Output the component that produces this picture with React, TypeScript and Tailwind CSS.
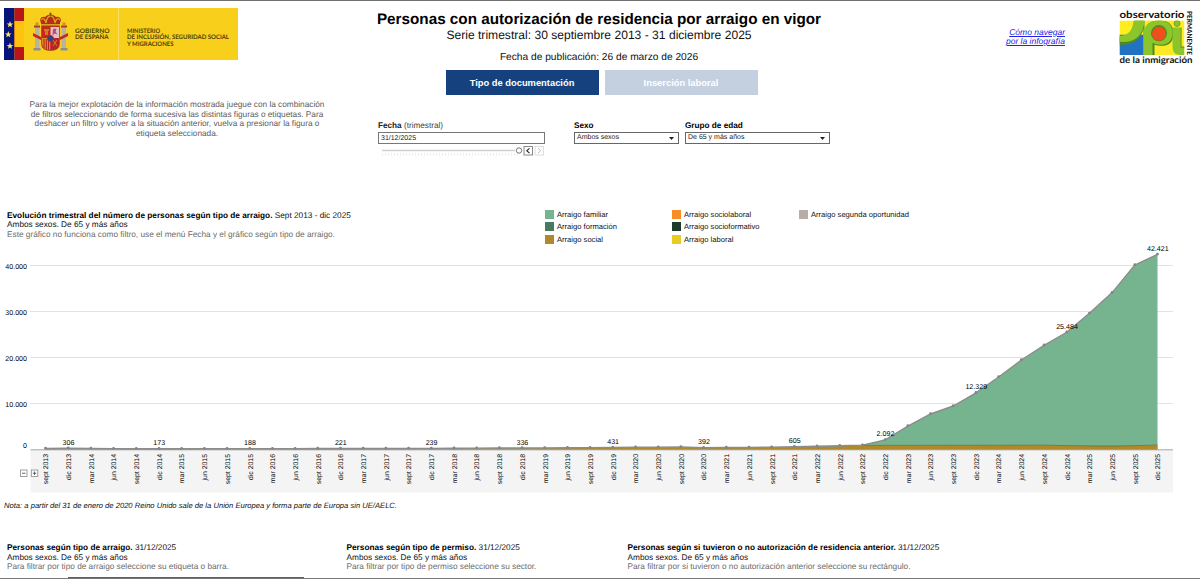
import clsx from 'clsx';

const LEFT = 45.5;
const STEP = 22.694;
const BASE = 209.5;
const UNIT = 46 / 10000;

const totals = [
  220, 306, 250, 200, 160, 173, 175, 180, 185, 188, 195, 200, 210, 221, 225, 230, 235,
  239, 260, 290, 310, 336, 350, 380, 400, 431, 480, 520, 540, 392, 420, 450, 520, 605,
  700, 820, 960, 2092, 5100, 7720, 9450, 12329, 15760, 19450, 22650, 25484, 29600, 34100,
  40100, 42421,
];

const months = ['mar', 'jun', 'sept', 'dic'];

const points = totals.map((total, i) => {
  const month = months[(i + 2) % 4];
  const year = 2013 + Math.floor((i + 2) / 4);
  return {
    total,
    label: `${month} ${year}`,
    isDec: month === 'dic',
    x: LEFT + i * STEP,
    y: BASE - total * UNIT,
    social: BASE - Math.min(total * 0.85, 850) * UNIT,
  };
});

const ticks = [0, 10000, 20000, 30000, 40000];

const legend = [
  { label: 'Arraigo familiar', color: 'bg-[#76b490]' },
  { label: 'Arraigo formación', color: 'bg-[#477a60]' },
  { label: 'Arraigo social', color: 'bg-[#b08a2a]' },
  { label: 'Arraigo sociolaboral', color: 'bg-[#f98d28]' },
  { label: 'Arraigo socioformativo', color: 'bg-[#1d3a2b]' },
  { label: 'Arraigo laboral', color: 'bg-[#e8cb25]' },
  { label: 'Arraigo segunda oportunidad', color: 'bg-[#b8ada8]' },
];

const panels = [
  {
    title: 'Personas según tipo de arraigo.',
    hint: 'Para filtrar por tipo de arraigo seleccione su etiqueta o barra.',
    width: 'w-[339.5px]',
  },
  {
    title: 'Personas según tipo de permiso.',
    hint: 'Para filtrar por tipo de permiso seleccione su sector.',
    width: 'w-[281px]',
  },
  {
    title: 'Personas según si tuvieron o no autorización de residencia anterior.',
    hint: 'Para filtrar por si tuvieron o no autorización anterior seleccione su rectángulo.',
    width: 'w-[400px]',
  },
];

const formatNumber = (n: number) => String(n).replace(/\B(?=(\d{3})+$)/g, '.');

function GovernmentLogo() {
  return (
    <svg className="block" width="234" height="52" viewBox="0 0 234 52">
      <rect width="234" height="52" fill="#f8d01c" />
      <rect width="10.5" height="52" fill="#07147a" />
      <rect x="10.5" width="9.5" height="52" fill="#b9161c" />
      <rect x="10.5" y="13" width="9.5" height="26" fill="#ffc20e" />
      <path d="M114.5 0V52" stroke="#fbdf66" strokeWidth="1" />
      {[[6, 16.5], [4.3, 26.5], [6, 38]].map(([x, y]) => (
        <path
          key={y}
          transform={`translate(${x} ${y})`}
          d="M0-3.4.9-1.1 3.3-1 1.4.5 2 2.8 0 1.5-2 2.8-1.4.5-3.3-1-.9-1.1Z"
          fill="#fbe36a"
        />
      ))}
      {/* coat of arms */}
      <g>
        <path d="M31 19h4.5v23H31zM57.500 19H62v23h-4.500z" fill="#b9b3a0" />
        <path d="M30 17.500h6v2h-6zM57 17.500h6v2h-6z" fill="#a63a22" />
        <path d="M31.500 14.500h3v3h-3zM58.500 14.500h3v3h-3z" fill="#c99418" />
        <path d="M29.500 40h7v2.500h-7zM56.500 40h7v2.500h-7z" fill="#8e8f86" />
        <path d="M29 25l8 4v3l-8-4zM64 25l-8 4v3l8-4z" fill="#c2281f" />
        <path d="M37.500 18h18v17.500q0 7-9 7t-9-7z" fill="#c8251f" stroke="#8b4a1c" strokeWidth=".7" />
        <path d="M46.500 19H55v11h-8.500z" fill="#e5bfc4" />
        <path d="M49 21.500q2-2 3.500 0l-1 2 2 3-3-1-2 2z" fill="#b14a86" />
        <path d="M38 30h8.500v12q-8.500-.5-8.500-6.500z" fill="#d8892a" />
        <path d="M40 31v9M42.300 31v10.500M44.500 31v11" stroke="#b7241d" strokeWidth="1" />
        <path d="M46.500 30H55v5.500q0 6-8.500 6.500z" fill="#b8222b" />
        <path d="M40 21h5v2h-1v4h-3v-4h-1z" fill="#cf7a26" />
        <path d="M49 32l4 6M53 32l-4 6" stroke="#d99122" strokeWidth=".8" />
        <circle cx="46.500" cy="30.500" r="3" fill="#244a86" stroke="#b7241d" strokeWidth=".8" />
        <path d="M37.500 17.500h18l1.500-6q-1-3.500-5-2.500-2-2.500-5.500-2.500T41 9q-4-1-5 2.500z" fill="#b72c1d" />
        <path d="M37 12q3-4 5 3 1-7 4.500-7t4.500 7q2-7 5-3M37 16.700h19" fill="none" stroke="#d6a31c" strokeWidth="1.300" />
        <path d="M46.500 4.500v4M45 6h3" stroke="#8f4a16" strokeWidth="1" />
      </g>
      <g fill="#4b3e0c" fontFamily="Lato, sans-serif" fontSize="6.200" fontWeight="700">
        <text x="71" y="24.600" textLength="34.500" lengthAdjust="spacingAndGlyphs">GOBIERNO</text>
        <text x="71" y="31.300" textLength="33.500" lengthAdjust="spacingAndGlyphs">DE ESPAÑA</text>
        <text x="123" y="24.600" textLength="33" lengthAdjust="spacingAndGlyphs">MINISTERIO</text>
        <text x="123" y="31.300" textLength="102" lengthAdjust="spacingAndGlyphs">DE INCLUSIÓN, SEGURIDAD SOCIAL</text>
        <text x="123" y="38" textLength="46.500" lengthAdjust="spacingAndGlyphs">Y MIGRACIONES</text>
      </g>
    </svg>
  );
}

function ObservatoryLogo() {
  return (
    <svg className="block" width="76" height="58" viewBox="0 0 76 58">
      <g fill="#111" fontFamily="Lato, sans-serif" fontWeight="700">
        <text x=".5" y="8.700" fontSize="10" textLength="65" lengthAdjust="spacingAndGlyphs">observatorio</text>
        <text x=".5" y="53.500" fontSize="9" textLength="73" lengthAdjust="spacingAndGlyphs">de la inmigración</text>
        <text transform="translate(67.500 2) rotate(90)" fontSize="7" textLength="44" lengthAdjust="spacingAndGlyphs">PERMANENTE</text>
      </g>
      <svg x="0.500" y="11.500" width="65" height="34.500" viewBox="0 0 65 34" preserveAspectRatio="none">
        <rect width="65" height="34" fill="#ffed1f" />
        <path d="M0 14h24v20H0z" fill="#2272c4" />
        <path d="M28 0h26v34H28z" fill="#ffe826" />
        <path d="M0 17q13 1 15-17h10v34h-1V8Q20 25 0 24z" fill="#4c8a20" />
        <path d="M0 15q13 0 14-15h11q-2 23-25 21z" fill="#8ac52c" />
        <path d="M25 34V13Q26 0 40 0q14 0 14 13 0 12-13 12-4 0-6-1v10z" fill="#4c8a20" />
        <path d="M24 34V13Q25 0 39 0q14 0 14 12 0 12-13 12-4 0-7-2v12z" fill="#8ac52c" />
        <circle cx="39.500" cy="12.500" r="8" fill="#4c8a20" />
        <circle cx="39.500" cy="13" r="7" fill="#ee4f1b" />
        <path d="M53 7h8v19h4v8h-5q-7-1-7-8z" fill="#8ac52c" />
        <path d="M61.500 7v19H65" fill="none" stroke="#4c8a20" strokeWidth="1" />
        <circle cx="57.500" cy="3" r="3" fill="#8ac52c" stroke="#4c8a20" strokeWidth=".6" />
      </svg>
    </svg>
  );
}

function Select({ label, value, className }: { label: string; value: string; className: string }) {
  return (
    <div className={className}>
      <p className="h-[12px] pt-[1px] text-[8.2px] leading-[10px] font-bold text-black">{label}</p>
      <div className="flex h-[12px] items-center justify-between border border-[#666] pr-[4px] pl-[2px] text-[7px] text-[#222]">
        <span>{value}</span>
        <svg width="5" height="3" viewBox="0 0 5 3">
          <path d="M0 0h5L2.500 3z" fill="#222" />
        </svg>
      </div>
    </div>
  );
}

function DateFilter() {
  return (
    <div className="w-[167px]">
      <p className="h-[12px] pt-[1px] text-[8.2px] leading-[10px] text-[#444]">
        <span className="font-bold text-[#222]">Fecha</span> (trimestral)
      </p>
      <div className="flex h-[12px] items-center border border-[#777] pt-px pl-[2px] text-[7px] leading-[9px] text-[#222]">
        31/12/2025
      </div>
      <svg className="block" width="167" height="14" viewBox="0 0 167 14">
        <path d="M4 6.500H137" stroke="#d0d0d0" strokeWidth="1.500" />
        <path d="M4 10.500H140" stroke="#e8e8e8" strokeWidth="2" strokeDasharray="1 2" />
        <circle cx="141" cy="6.500" r="2.700" fill="#fff" stroke="#555" strokeWidth=".8" />
        <rect x="146" y="2.500" width="8.500" height="8.500" fill="#fff" stroke="#888" />
        <path d="M151.500 4.300l-2.700 2.400 2.700 2.400" fill="none" stroke="#222" strokeWidth="1.100" />
        <rect x="157" y="2.500" width="8.500" height="8.500" fill="#fff" stroke="#ddd" />
        <path d="M160 4.300l2.700 2.400-2.700 2.400" fill="none" stroke="#bbb" />
      </svg>
    </div>
  );
}

function EvolutionChart() {
  const line = points.map((p) => `${p.x},${p.y}`).join(' ');
  const social = points.map((p) => `${p.x},${p.social}`).join(' ');
  const last = points[points.length - 1];

  return (
    <svg className="block" width="1200" height="255" viewBox="0 0 1200 255" fontFamily="Liberation Sans, Arial, sans-serif">
      <rect x="30.500" y="210" width="1142.500" height="42.500" fill="#f4f4f4" />
      {ticks.map((tick) => (
        <g key={tick}>
          {tick > 0 && (
            <path d={`M30.500 ${Math.floor(BASE - tick * UNIT) + 0.5}H1173`} stroke="#c4c4c4" strokeDasharray="1 1" />
          )}
          <text x="27" y={BASE - tick * UNIT + (tick ? 3 : -1.7)} fontSize="7.100" textAnchor="end" fill="#000">
            {formatNumber(tick)}
          </text>
        </g>
      ))}
      <polygon points={`${LEFT},${BASE} ${line} ${last.x},${BASE}`} fill="#76b490" />
      <polygon points={`${LEFT},${BASE} ${social} ${last.x},${BASE}`} fill="#b08a2a" />
      <path d="M862 205.400L1045 205.200L1090 206L1120 206L1157.500 205" fill="none" stroke="#6b7c45" strokeWidth=".9" />
      <path d="M30.500 209.800H1173" stroke="#8f8f8f" strokeWidth=".8" />
      <polyline points={line} fill="none" stroke="#8c8c8c" strokeWidth="1.400" />
      {points.map((p) => (
        <circle key={p.label} cx={p.x} cy={p.y - 0.3} r="1.400" fill="#858585" />
      ))}
      {points.map((p) => (
        <text
          key={p.label}
          transform={`translate(${p.x + 2.8} 214) rotate(-90)`}
          fontSize="6.900"
          textAnchor="end"
          fill="#000"
        >
          {p.label}
        </text>
      ))}
      {points.filter((p) => p.isDec).map((p) => (
        <text key={p.label} x={p.x + 0.3} y={p.y - 3.4} fontSize="7.100" textAnchor="middle" fill="#000">
          {formatNumber(p.total)}
        </text>
      ))}
      <g fill="#fff" stroke="#888" strokeWidth=".8">
        <rect x="20.500" y="230" width="6.500" height="6.500" />
        <rect x="31.300" y="230" width="6.500" height="6.500" />
        <path d="M22 233.250h3.500M32.800 233.250h3.500M34.550 231.500v3.500" stroke="#444" />
      </g>
    </svg>
  );
}

export default function App() {
  return (
    <div className="flex h-[579px] w-[1200px] flex-col overflow-hidden border-t border-b border-t-[#6f6f6f] border-b-[#777] bg-white font-['Liberation_Sans',Arial,sans-serif] [text-rendering:geometricPrecision]">
      <header className="flex h-[208.5px] shrink-0">
        <div className="w-[359px] pt-[7px] pl-[4px]">
          <GovernmentLogo />
          <p className="mt-[40px] w-[346px] text-center text-[8.25px] leading-[9.6px] text-[#5c5c5c]">
            Para la mejor explotación de la información mostrada juegue con la combinación
            <br />
            de filtros seleccionando de forma sucesiva las distintas figuras o etiquetas. Para
            <br />
            deshacer un filtro y volver a la situación anterior, vuelva a presionar la figura o
            <br />
            etiqueta seleccionada.
          </p>
        </div>

        <div className="w-[480px] pt-[10px]">
          <h1 className="text-center text-[15.25px] leading-[17px] font-bold text-black">
            Personas con autorización de residencia por arraigo en vigor
          </h1>
          <p className="text-center text-[12.1px] leading-[14px] text-[#111]">
            Serie trimestral: 30 septiembre 2013 - 31 diciembre 2025
          </p>
          <p className="mt-[10px] text-center text-[10.2px] leading-[12px] text-[#111]">
            Fecha de publicación: 26 de marzo de 2026
          </p>
          <div className="mt-[6px] ml-[86.5px] flex gap-[6px] text-[9.35px] font-bold text-white">
            <button className="h-[25px] w-[153px] bg-[#15427f] pt-px">Tipo de documentación</button>
            <button className="h-[25px] w-[153px] bg-[#c4cfdf] pt-px">Inserción laboral</button>
          </div>
          <div className="mt-[25px] ml-[19px] flex">
            <DateFilter />
            <Select className="ml-[29px] w-[105px]" label="Sexo" value="Ambos sexos" />
            <Select className="ml-[6px] w-[145px]" label="Grupo de edad" value="De 65 y más años" />
          </div>
        </div>

        <div className="flex flex-1 justify-end pt-[8px] pr-[5px]">
          <a className="mt-[18.500px] mr-[54px] text-right text-[8.5px] leading-[9.6px] text-[#2222e8] italic underline" href="#ayuda">
            Cómo navegar
            <br />
            por la infografía
          </a>
          <ObservatoryLogo />
        </div>
      </header>

      <section className="flex h-[30.5px] shrink-0 pl-[7px]">
        <div className="w-[537.5px] pt-[1px] text-[8.25px] leading-[9.6px] text-[#111]">
          <h2>
            <span className="font-bold text-black">
              Evolución trimestral del número de personas según tipo de arraigo.
            </span>{' '}
            Sept 2013 - dic 2025
          </h2>
          <p>Ambos sexos. De 65 y más años</p>
          <p className="text-[#6b6b6b]">Este gráfico no funciona como filtro, use el menú Fecha y el gráfico según tipo de arraigo.</p>
        </div>
        <ul className="grid grid-flow-col grid-cols-[127px_127px_127px] grid-rows-[12.75px_12.75px_12.75px] text-[7.6px] text-[#111]">
          {legend.map((item) => (
            <li key={item.label} className="flex h-[9px] items-center gap-[3.5px] leading-[9px]">
              <span className={clsx('size-[9px]', item.color)} />
              {item.label}
            </li>
          ))}
        </ul>
      </section>

      <EvolutionChart />
      <p className="mt-[5.5px] pl-[4px] text-[7.62px] leading-[10px] text-[#111] italic">
        Nota: a partir del 31 de enero de 2020 Reino Unido sale de la Unión Europea y forma parte de Europa sin UE/AELC.
      </p>

      <section className="mt-[32.5px] flex h-[34px] shrink-0 pl-[7px]">
        {panels.map((panel) => (
          <div key={panel.title} className={clsx('text-[8.25px] leading-[9.6px] text-[#111]', panel.width)}>
            <h2>
              <span className="font-bold text-black">{panel.title}</span> 31/12/2025
            </h2>
            <p>Ambos sexos. De 65 y más años</p>
            <p className="text-[#6b6b6b]">{panel.hint}</p>
          </div>
        ))}
      </section>
      <div className="ml-[68px] h-px w-[236px] shrink-0 bg-[#476b57]" />
    </div>
  );
}
